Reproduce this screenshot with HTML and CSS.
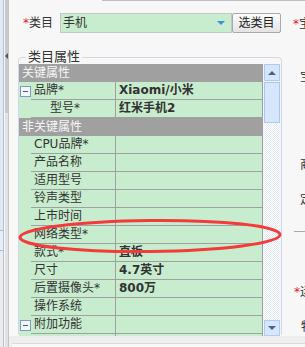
FILE: index.html
```html
<!DOCTYPE html>
<html lang="zh-CN">
<head>
  <meta charset="UTF-8">
  <meta name="viewport" content="width=device-width, initial-scale=1.0">
  <title>类目属性</title>
  <link rel="stylesheet" href="styles.css">
</head>
<body>
  <div class="screen">
    <div class="side">
      <div class="side-panel">
        <div class="sp-top"></div>
        <div class="sp-tab"></div>
        <div class="sp-rest"></div>
      </div>
      <div class="side-bar">
        <div class="sb-thumb"><span class="sb-arrow"></span></div>
      </div>
    </div>

    <div class="main">
      <div class="top-edge"></div>
      <div class="body">
        <div class="form-col">
          <div class="cat-row">
            <label class="field-label"><em>*</em>类目</label>
            <div class="combo"><span>手机</span><i class="combo-arrow"></i></div>
            <button class="btn">选类目</button>
          </div>

          <fieldset class="attrs">
            <legend>类目属性</legend>
            <div class="grid-wrap">
              <div class="grid">
                <div class="grp">关键属性</div>
                <div class="row">
                  <div class="gutter"><span class="toggle"></span></div>
                  <div class="key">品牌*</div>
                  <div class="val">Xiaomi/小米</div>
                </div>
                <div class="row">
                  <div class="gutter"></div>
                  <div class="key sub">型号*</div>
                  <div class="val">红米手机2</div>
                </div>
                <div class="grp">非关键属性</div>
                <div class="row"><div class="gutter"></div><div class="key">CPU品牌*</div><div class="val"></div></div>
                <div class="row"><div class="gutter"></div><div class="key">产品名称</div><div class="val"></div></div>
                <div class="row"><div class="gutter"></div><div class="key">适用型号</div><div class="val"></div></div>
                <div class="row"><div class="gutter"></div><div class="key">铃声类型</div><div class="val"></div></div>
                <div class="row"><div class="gutter"></div><div class="key">上市时间</div><div class="val"></div></div>
                <div class="row"><div class="gutter"></div><div class="key">网络类型*</div><div class="val"></div></div>
                <div class="row"><div class="gutter"></div><div class="key">款式*</div><div class="val">直板</div></div>
                <div class="row"><div class="gutter"></div><div class="key">尺寸</div><div class="val">4.7英寸</div></div>
                <div class="row"><div class="gutter"></div><div class="key">后置摄像头*</div><div class="val">800万</div></div>
                <div class="row"><div class="gutter"></div><div class="key">操作系统</div><div class="val"></div></div>
                <div class="row">
                  <div class="gutter"><span class="toggle"></span></div>
                  <div class="key">附加功能</div>
                  <div class="val"></div>
                </div>
                <div class="row"><div class="gutter"></div><div class="key"></div><div class="val"></div></div>
              </div>
              <div class="vscroll">
                <div class="vs-btn up"></div>
                <div class="vs-thumb"></div>
                <div class="vs-track"></div>
                <div class="vs-btn down"></div>
              </div>
            </div>
          </fieldset>
        </div>

        <div class="side-col">
          <div class="cut t-1"><em>*</em>宝</div>
          <div class="cut t-2">宝</div>
          <div class="cut t-3">商</div>
          <div class="cut t-4">定</div>
          <div class="cut-line"></div>
          <div class="cut t-5"><em>*</em>运</div>
          <div class="cut t-6">物</div>
        </div>
      </div>
      <div class="status"><div class="status-inner"></div></div>
    </div>

    <!-- red mark drawn over the screenshot -->
    <svg class="mark" width="305" height="347" viewBox="0 0 305 347">
      <ellipse cx="150" cy="236" rx="130" ry="15.5" fill="none" stroke="#f33b3b" stroke-width="3" transform="rotate(-0.6 150 236)"/>
    </svg>
  </div>
</body>
</html>
```

FILE: styles.css
```css
* {
  box-sizing: border-box;
}
html, body {
  margin: 0;
  padding: 0;
}
body {
  font-family: "DejaVu Sans", "Noto Sans CJK SC", sans-serif;
  font-size: 12px;
  color: #333;
  background: #f7f7f7;
}
em {
  font-style: normal;
  color: #e8141e;
}

.screen {
  position: relative;
  display: flex;
  width: 305px;
  height: 347px;
  overflow: hidden;
}

/* left splitter strip */
.side {
  display: flex;
  width: 9px;
  flex: none;
}
.side-panel {
  display: flex;
  flex-direction: column;
  width: 4px;
  border-right: 1px solid #b3c2d4;
}
.sp-top {
  height: 230px;
  background: #dfe9f5;
}
.sp-tab {
  height: 21px;
  background: #e6eff9;
  border-top: 1px solid #a4bad8;
  border-bottom: 1px solid #a4bad8;
}
.sp-rest {
  flex: 1;
  background: #ececec;
}
.side-bar {
  display: flex;
  flex-direction: column;
  width: 5px;
  margin-left: 1px;
  background: #e2e2e2;
  border-right: 1px solid #c4c4c4;
}
.sb-thumb {
  height: 113px;
  background: #c9c9c9;
  padding-top: 53px;
}
.sb-arrow {
  display: block;
  width: 0;
  height: 0;
  border-top: 3px solid transparent;
  border-bottom: 3px solid transparent;
  border-right: 3px solid #555;
}

/* main area */
.main {
  display: flex;
  flex-direction: column;
  flex: 1;
  min-width: 0;
}
.top-edge {
  height: 1px;
  margin-left: 93px;
  background: #bdbdbd;
}
.body {
  display: flex;
  height: 335px;
  overflow: hidden;
}
.form-col {
  width: 273px;
  flex: none;
}

.cat-row {
  display: flex;
  align-items: center;
  height: 20px;
  margin-top: 12px;
  padding-left: 14px;
}
.field-label {
  width: 37px;
  line-height: 14px;
}
.combo {
  display: flex;
  align-items: center;
  justify-content: space-between;
  width: 172px;
  height: 20px;
  padding: 0 6px 0 2px;
  background: #c8ecce;
  border: 1px solid #c6c6c6;
  line-height: 18px;
}
.combo-arrow {
  width: 0;
  height: 0;
  border-left: 4px solid transparent;
  border-right: 4px solid transparent;
  border-top: 4px solid #3d8fd9;
}
.btn {
  width: 49px;
  height: 20px;
  padding: 0;
  font-family: inherit;
  font-size: 12px;
  color: #222;
  line-height: 18px;
  border: 1px solid #a9a9a9;
  border-radius: 2px;
  background: linear-gradient(#fdfdfd, #e3e3e3);
}

/* attribute fieldset */
.attrs {
  width: 264px;
  margin: 17px 0 0 9px;
  padding: 0;
  min-width: 0;
  border: 1px solid #d0dae6;
  border-radius: 4px;
}
.attrs legend {
  margin-left: 7px;
  padding: 0 2px;
  font-size: 13px;
  line-height: 14px;
  color: #333;
}
.grid-wrap {
  display: flex;
  height: 272px;
}
.grid {
  width: 244px;
  flex: none;
  overflow: hidden;
  background: #c8ecce;
}
.grp {
  height: 18px;
  padding-left: 3px;
  line-height: 18px;
  background: #a0a0a0;
  color: #f6f6f6;
}
.row {
  display: flex;
  height: 18px;
}
.gutter {
  display: flex;
  align-items: center;
  width: 12px;
  flex: none;
  padding-left: 1px;
}
.toggle {
  position: relative;
  width: 11px;
  height: 11px;
  border: 1px solid #7f9cc0;
  background: #f3f7fb;
}
.toggle::after {
  content: "";
  position: absolute;
  left: 2px;
  top: 4px;
  width: 5px;
  height: 1px;
  background: #4b5f80;
}
.key {
  width: 85px;
  flex: none;
  padding-left: 3px;
  line-height: 17px;
  white-space: nowrap;
  border-right: 1px solid #a0a0a0;
  border-bottom: 1px solid #a0a0a0;
}
.key.sub {
  padding-left: 19px;
}
.val {
  flex: 1;
  padding-left: 3px;
  line-height: 17px;
  font-weight: bold;
  white-space: nowrap;
  border-right: 1px solid #a0a0a0;
  border-bottom: 1px solid #a0a0a0;
}

/* grid scrollbar */
.vscroll {
  display: flex;
  flex-direction: column;
  width: 18px;
  padding: 0 1px;
  background-color: #fff;
  background-image: repeating-conic-gradient(#e2eaf6 0 25%, #fff 0 50%);
  background-size: 2px 2px;
}
.vs-btn {
  display: flex;
  align-items: center;
  justify-content: center;
  height: 17px;
  background: #d6e6fc;
  border: 1px solid #b0cbef;
}
.vs-btn::after {
  content: "";
  width: 0;
  height: 0;
  border-left: 4px solid transparent;
  border-right: 4px solid transparent;
}
.vs-btn.up::after {
  border-bottom: 4px solid #4d6185;
}
.vs-btn.down {
  height: 16px;
}
.vs-btn.down::after {
  border-top: 4px solid #4d6185;
}
.vs-thumb {
  height: 41px;
  margin-top: 1px;
  background: #d6e6fc;
  border: 1px solid #a9c7ef;
}
.vs-track {
  flex: 1;
}

/* cut-off right column */
.side-col {
  display: flex;
  flex-direction: column;
  flex: 1;
  line-height: 12px;
  white-space: nowrap;
}
.cut {
  height: 12px;
  margin-left: 18px;
}
.t-1 { margin-top: 17px; margin-left: 11px; }
.t-2 { margin-top: 41px; }
.t-3 { margin-top: 76px; }
.t-4 { margin-top: 23px; }
.t-5 { margin-top: 54px; margin-left: 12px; }
.t-6 { margin-top: 23px; margin-left: 19px; }
.cut-line {
  height: 1px;
  margin: 25px 0 0 12px;
  background: #a8a8a8;
}

.status {
  flex: 1;
  padding: 7px 0 0 3px;
  background: #eeeeee;
}
.status-inner {
  height: 100%;
  border-top: 1px solid #d9d9d9;
  background: #f8f8f8;
}

.mark {
  position: absolute;
  left: 0;
  top: 0;
  pointer-events: none;
}
```
